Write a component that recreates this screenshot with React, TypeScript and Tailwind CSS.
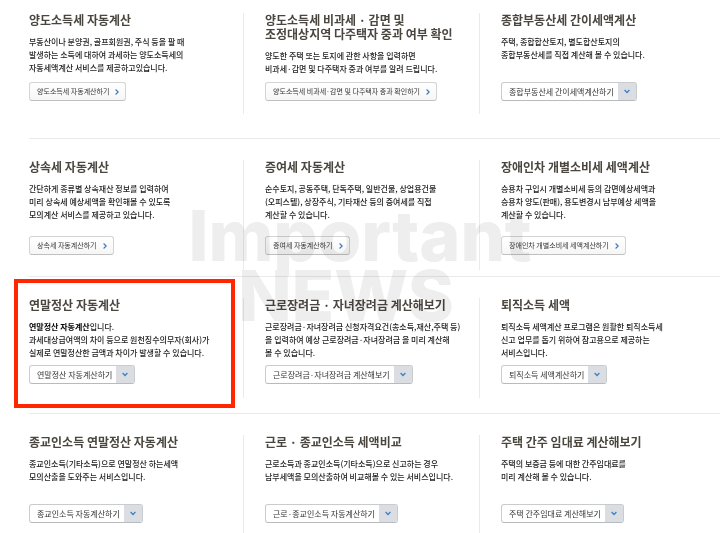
import React from "react";

type Item = {
  title: string[];
  body: React.ReactNode[];
  action: string;
  menu?: boolean;
  highlighted?: boolean;
};

type Row = { className: string; cellClassName: string; items: Item[] };

const rows: Row[] = [
  {
    className: "pt-[13px] pb-6",
    cellClassName: "min-h-[101px] pb-[13px]",
    items: [
      {
        title: ["양도소득세 자동계산"],
        body: [
          "부동산이나 분양권, 골프회원권, 주식 등을 팔 때",
          "발생하는 소득에 대하여 과세하는 양도소득세의",
          "자동세액계산 서비스를 제공하고있습니다.",
        ],
        action: "양도소득세 자동계산하기",
      },
      {
        title: ["양도소득세 비과세 · 감면 및", "조정대상지역 다주택자 중과 여부 확인"],
        body: [
          "양도한 주택 또는 토지에 관한 사항을 입력하면",
          "비과세·감면 및 다주택자 중과 여부를 알려 드립니다.",
        ],
        action: "양도소득세 비과세·감면 및 다주택자 중과 확인하기",
      },
      {
        title: ["종합부동산세 간이세액계산"],
        body: ["주택, 종합합산토지, 별도합산토지의", "종합부동산세를 직접 계산해 볼 수 있습니다."],
        action: "종합부동산세 간이세액계산하기",
        menu: true,
      },
    ],
  },
  {
    className: "border-t pt-[21px] pb-1.5",
    cellClassName: "min-h-[110px] pb-[15px]",
    items: [
      {
        title: ["상속세 자동계산"],
        body: [
          "간단하게 종류별 상속재산 정보를 입력하여",
          "미리 상속세 예상세액을 확인해볼 수 있도록",
          "모의계산 서비스를 제공하고 있습니다.",
        ],
        action: "상속세 자동계산하기",
      },
      {
        title: ["증여세 자동계산"],
        body: [
          "순수토지, 공동주택, 단독주택, 일반건물, 상업용건물",
          "(오피스텔), 상장주식, 기타재산 등의 증여세를 직접",
          "계산할 수 있습니다.",
        ],
        action: "증여세 자동계산하기",
      },
      {
        title: ["장애인차 개별소비세 세액계산"],
        body: [
          "승용차 구입시 개별소비세 등의 감면예상세액과",
          "승용차 양도(판매), 용도변경시 납부예상 세액을",
          "계산할 수 있습니다.",
        ],
        action: "장애인차 개별소비세 세액계산하기",
      },
    ],
  },
  {
    className: "border-t pt-[21px] pb-[15px]",
    cellClassName: "min-h-[100px] pb-3.5",
    items: [
      {
        title: ["연말정산 자동계산"],
        body: [
          <>
            <strong className="font-bold text-black">연말정산 자동계산</strong>입니다.
          </>,
          "과세대상급여액의 차이 등으로 원천징수의무자(회사)가",
          "실제로 연말정산한 금액과 차이가 발생할 수 있습니다.",
        ],
        action: "연말정산 자동계산하기",
        menu: true,
        highlighted: true,
      },
      {
        title: ["근로장려금 · 자녀장려금 계산해보기"],
        body: [
          "근로장려금·자녀장려금 신청자격요건(총소득,재산,주택 등)",
          "을 입력하여 예상 근로장려금·자녀장려금 을 미리 계산해",
          "볼 수 있습니다.",
        ],
        action: "근로장려금·자녀장려금 계산해보기",
        menu: true,
      },
      {
        title: ["퇴직소득 세액"],
        body: [
          "퇴직소득 세액계산 프로그램은 원활한 퇴직소득세",
          "신고 업무를 돕기 위하여 참고용으로 제공하는",
          "서비스입니다.",
        ],
        action: "퇴직소득 세액계산하기",
        menu: true,
      },
    ],
  },
  {
    className: "border-t pt-[21px]",
    cellClassName: "min-h-[98px] pb-2.5",
    items: [
      {
        title: ["종교인소득 연말정산 자동계산"],
        body: ["종교인소득(기타소득)으로 연말정산 하는세액", "모의산출을 도와주는 서비스입니다."],
        action: "종교인소득 자동계산하기",
        menu: true,
      },
      {
        title: ["근로 · 종교인소득 세액비교"],
        body: [
          "근로소득과 종교인소득(기타소득)으로 신고하는 경우",
          "납부세액을 모의산출하여 비교해볼 수 있는 서비스입니다.",
        ],
        action: "근로·종교인소득 자동계산하기",
        menu: true,
      },
      {
        title: ["주택 간주 임대료 계산해보기"],
        body: ["주택의 보증금 등에 대한 간주임대료를", "미리 계산해 볼 수 있습니다."],
        action: "주택 간주임대료 계산해보기",
        menu: true,
      },
    ],
  },
];

function LinkButton({ label }: { label: string }) {
  return (
    <button
      type="button"
      className="flex h-[19px] items-center gap-1.5 rounded-[3px] border border-[#d4d4d4] border-b-[#c0c0c0] bg-linear-to-b from-white to-[#f6f6f6] pr-1.5 pl-[7px] text-[7px] text-[#333]"
    >
      {label}
      <svg viewBox="0 0 4 6" className="h-1.5 w-1 fill-none stroke-[#3c74b8] stroke-[1.1]" aria-hidden="true">
        <path d="M0.6 0.5 3.2 3 0.6 5.5" />
      </svg>
    </button>
  );
}

function MenuButton({ label }: { label: string }) {
  return (
    <button
      type="button"
      aria-haspopup="menu"
      className="flex h-[19px] items-stretch overflow-hidden rounded-[3px] border border-[#c9cccd] border-b-[#b8bbbd] bg-white text-[8px] text-[#333]"
    >
      <span className="flex items-center pr-1 pl-[7px]">{label}</span>
      <span className="flex w-[18px] items-center justify-center bg-[#dadee2]">
        <svg viewBox="0 0 6 5" className="h-[5px] w-1.5 fill-none stroke-[#3f7fc4] stroke-[1.3]" aria-hidden="true">
          <path d="M0.6 1 3 3.5 5.4 1" />
        </svg>
      </span>
    </button>
  );
}

function Cell({ item, className }: { item: Item; className: string }) {
  return (
    <section
      className={`relative flex flex-col items-start border-[#eaeaea] whitespace-nowrap not-first:border-l not-first:pl-[21px] ${className}`}
    >
      {item.highlighted && (
        <div className="pointer-events-none absolute -top-[19px] right-2 -bottom-2.5 -left-[15px] border-4 border-[#ff2600]" />
      )}
      <h2 className="text-[12px] leading-[14px] font-bold text-[#4a463f]">
        {item.title.map((line, i) => (
          <span key={i} className="block">
            {line}
          </span>
        ))}
      </h2>
      <p className="mt-2 text-[8px] leading-[13px] font-medium text-[#222]">
        {item.body.map((line, i) => (
          <span key={i} className="block">
            {line}
          </span>
        ))}
      </p>
      <div className="mt-auto">{item.menu ? <MenuButton label={item.action} /> : <LinkButton label={item.action} />}</div>
    </section>
  );
}

export default function App() {
  return (
    <main className="relative overflow-hidden bg-white pl-[29px] font-['Noto_Sans_CJK_KR',sans-serif]">
      {rows.map((row, i) => (
        <div key={i} className={`grid grid-cols-[214fr_236fr_241fr] border-[#eaeaea] ${row.className}`}>
          {row.items.map((item) => (
            <Cell key={item.action} item={item} className={row.cellClassName} />
          ))}
        </div>
      ))}
      <div
        aria-hidden="true"
        className="pointer-events-none absolute inset-x-0 top-[206px] text-center font-['Inter',sans-serif] text-[70px] leading-[60px] font-extrabold text-[#eeeeee] mix-blend-multiply"
      >
        <div>Important</div>
        <div className="pr-7">NEWS</div>
      </div>
    </main>
  );
}
